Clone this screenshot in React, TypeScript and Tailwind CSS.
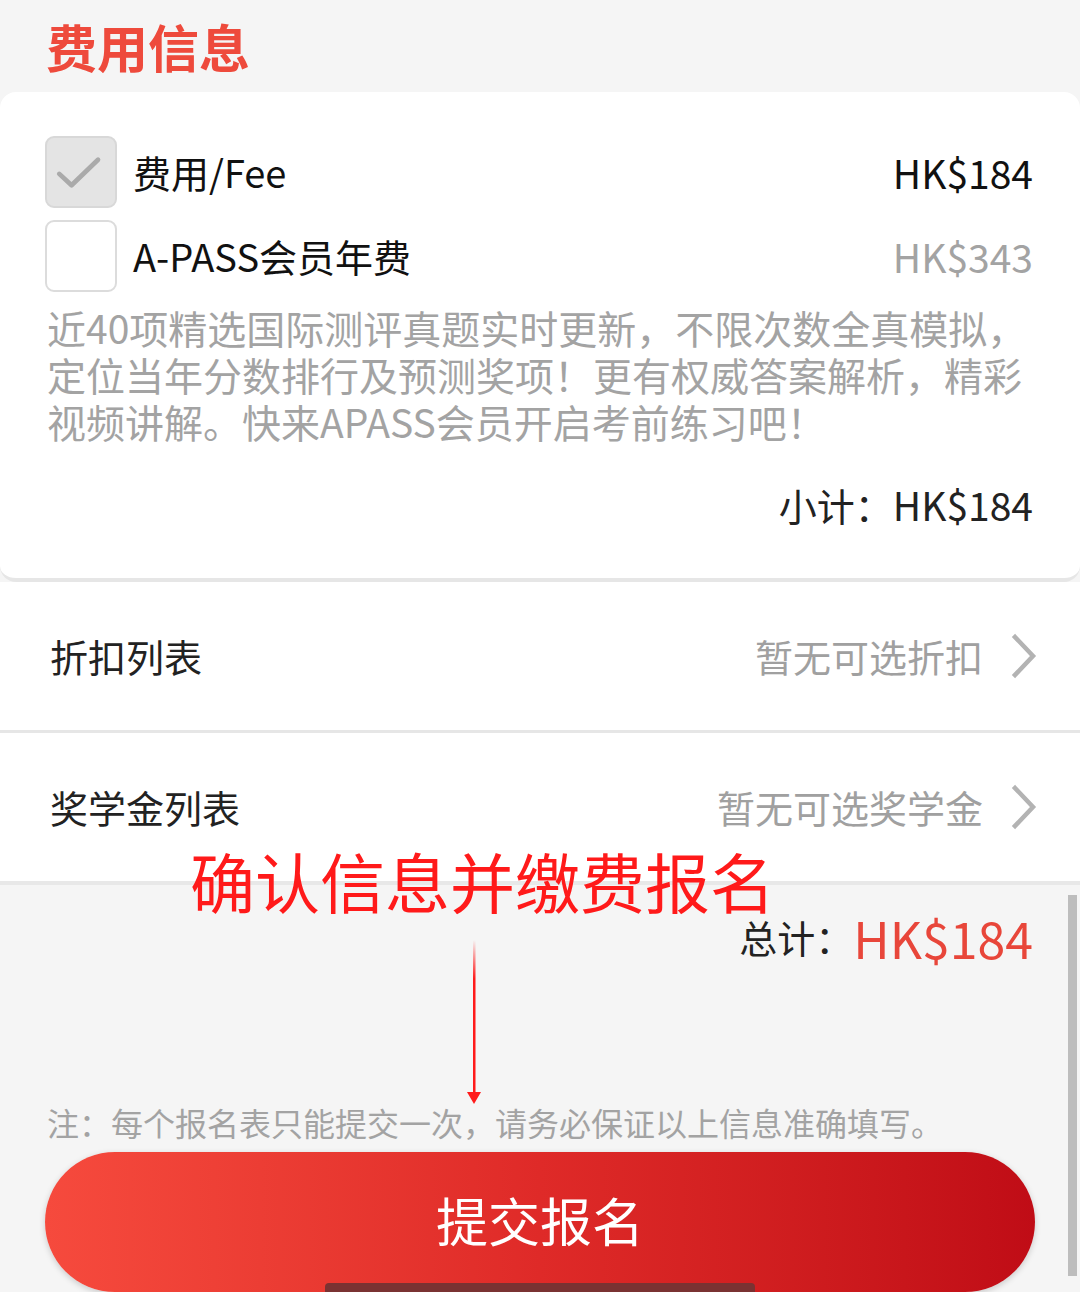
import React from "react";

function Chevron() {
  return (
    <svg width="26" height="46" viewBox="0 0 26 46" className="shrink-0">
      <polyline
        points="4,4 22,23 4,42"
        fill="none"
        stroke="#b3b3b3"
        strokeWidth="4.5"
        strokeLinecap="square"
      />
    </svg>
  );
}

function CheckBox({ checked }: { checked: boolean }) {
  if (!checked) {
    return (
      <div className="w-[72px] h-[72px] shrink-0 rounded-[9px] border-2 border-[#dcdcdc] bg-white" />
    );
  }
  return (
    <div className="w-[72px] h-[72px] shrink-0 rounded-[9px] border-2 border-[#d8d8d8] bg-[#e4e4e4] flex items-center justify-center">
      <svg width="72" height="72" viewBox="0 0 72 72">
        <polyline
          points="13,38 26,50 54,23"
          fill="none"
          stroke="#aaaaaa"
          strokeWidth="5"
          strokeLinecap="round"
          strokeLinejoin="round"
        />
      </svg>
    </div>
  );
}

function FeeRow({
  checked,
  label,
  price,
  muted,
}: {
  checked: boolean;
  label: string;
  price: string;
  muted?: boolean;
}) {
  return (
    <div className="flex items-center h-[72px]">
      <CheckBox checked={checked} />
      <span className="ml-[16px] text-[38px] leading-none text-[#111]">{label}</span>
      <span
        className={
          "ml-auto text-[39px] leading-none " +
          (muted ? "text-[#a3a3a3]" : "text-[#111]")
        }
      >
        {price}
      </span>
    </div>
  );
}

function ListRow({ title, value }: { title: string; value: string }) {
  return (
    <div className="flex items-center h-[148px] bg-white pl-[50px] pr-[43px]">
      <span className="text-[38px] leading-none text-[#222]">{title}</span>
      <span className="ml-auto text-[38px] leading-none text-[#a0a0a0]">{value}</span>
      <span className="ml-[28px]">
        <Chevron />
      </span>
    </div>
  );
}

export default function App() {
  return (
    <div className="relative w-[1080px] h-[1292px] overflow-hidden bg-[#f5f5f5] font-['Noto_Sans_CJK_SC','Noto_Sans',sans-serif]">
      {/* header */}
      <div className="h-[92px] pl-[46px] pt-[21px]">
        <h1 className="text-[51px] leading-none font-bold text-[#ee4a3c]">费用信息</h1>
      </div>

      {/* fee card */}
      <div className="bg-white rounded-[16px] border-b-4 border-[#e6e6e6] pl-[45px] pr-[47px] pt-[44px] pb-[50px]">
        <div className="flex flex-col gap-[12px]">
          <FeeRow checked label="费用/Fee" price="HK$184" />
          <FeeRow checked={false} label="A-PASS会员年费" price="HK$343" muted />
        </div>
        <p className="mt-[12px] pl-[2px] text-[39px] leading-[47px] text-[#a3a3a3] whitespace-nowrap">
          近40项精选国际测评真题实时更新，不限次数全真模拟，
          <br />
          定位当年分数排行及预测奖项！更有权威答案解析，精彩
          <br />
          视频讲解。快来APASS会员开启考前练习吧！
        </p>
        <div className="mt-[36px] flex justify-end items-center h-[47px] text-[38px] leading-none text-[#222]">
          小计：<span className="text-[39px]">HK$184</span>
        </div>
      </div>

      {/* lists */}
      <ListRow title="折扣列表" value="暂无可选折扣" />
      <div className="h-[3px] bg-[#e6e6e6]" />
      <ListRow title="奖学金列表" value="暂无可选奖学金" />
      <div className="h-[4px] bg-[#e8e8e8]" />

      {/* totals & submit */}
      <div className="pt-[22px] px-[45px]">
        <div className="flex justify-end items-center h-[60px] pr-[2px]">
          <span className="text-[38px] leading-none text-[#222]">总计：</span>
          <span className="text-[50px] leading-none text-[#e8463a]">HK$184</span>
        </div>
        <p className="mt-[135px] pl-[2px] text-[32px] leading-[40px] text-[#a3a3a3]">
          注：每个报名表只能提交一次，请务必保证以上信息准确填写。
        </p>
        <button className="mt-[10px] w-[990px] h-[140px] rounded-full bg-gradient-to-r from-[#f64a3d] via-[#df2a28] to-[#c00c16] shadow-[0_2px_6px_rgba(0,0,0,0.18)] flex items-center justify-center">
          <span className="text-[52px] leading-none text-white -mt-[4px]">提交报名</span>
        </button>
      </div>

      {/* scrollbar indicator */}
      <div className="absolute right-[3px] top-[895px] w-[9px] h-[381px] bg-[#bdbdbd]" />

      {/* home indicator */}
      <div className="absolute left-[325px] top-[1283px] w-[430px] h-[14px] rounded-[4px] bg-[#7a3232]" />

      {/* red annotation overlay */}
      <div className="absolute left-[190px] top-[848px] text-[65px] leading-none text-[#ff1a1a] whitespace-nowrap">
        确认信息并缴费报名
      </div>
      <svg
        className="absolute left-[464px] top-[936px]"
        width="20"
        height="172"
        viewBox="0 0 20 172"
      >
        <defs>
          <linearGradient id="arrowFade" x1="0" y1="0" x2="0" y2="1">
            <stop offset="0" stopColor="#ff1a1a" stopOpacity="0" />
            <stop offset="0.25" stopColor="#ff1a1a" stopOpacity="1" />
            <stop offset="1" stopColor="#ff1a1a" stopOpacity="1" />
          </linearGradient>
        </defs>
        <rect x="9" y="4" width="2.5" height="156" fill="url(#arrowFade)" />
        <polygon points="3,156 17,156 10,168" fill="#ff1a1a" />
      </svg>
    </div>
  );
}
